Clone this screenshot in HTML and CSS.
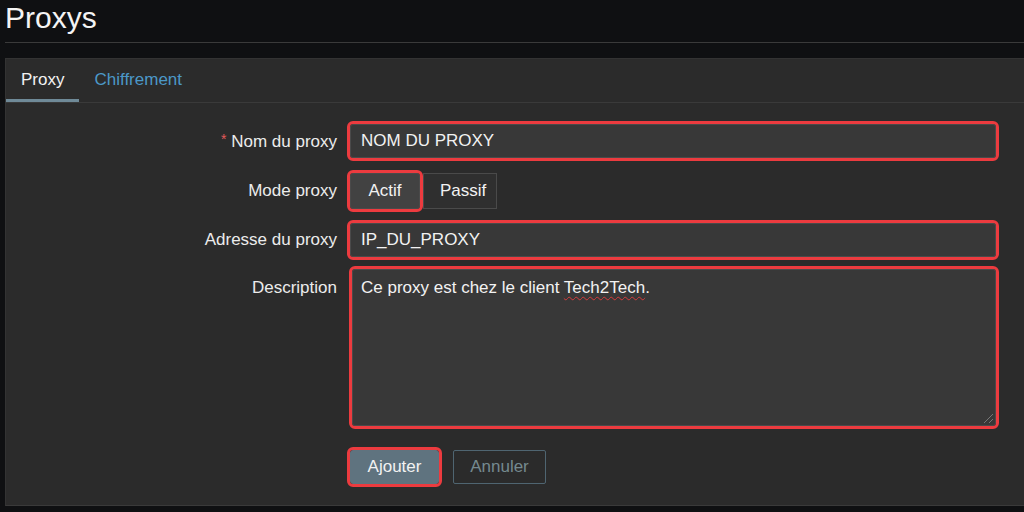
FILE: index.html
```html
<!DOCTYPE html>
<html lang="fr">
<head>
    <meta charset="UTF-8">
    <title>Proxys</title>
    <link rel="stylesheet" href="styles.css">
</head>
<body>
    <h1 class="page-title">Proxys</h1>

    <div class="panel">
        <div class="tabs">
            <div class="tab active">Proxy</div>
            <div class="tab">Chiffrement</div>
        </div>

        <div class="form">
            <div class="form-row row-name">
                <label class="form-label"><span class="required">*</span> Nom du proxy</label>
                <div class="form-field">
                    <div class="text-input highlight">NOM DU PROXY</div>
                </div>
            </div>

            <div class="form-row row-mode">
                <label class="form-label">Mode proxy</label>
                <div class="form-field">
                    <div class="segmented">
                        <div class="segment selected highlight">Actif</div>
                        <div class="segment">Passif</div>
                    </div>
                </div>
            </div>

            <div class="form-row row-address">
                <label class="form-label">Adresse du proxy</label>
                <div class="form-field">
                    <div class="text-input highlight">IP_DU_PROXY</div>
                </div>
            </div>

            <div class="form-row row-desc">
                <label class="form-label">Description</label>
                <div class="form-field">
                    <div class="textarea highlight">
                        Ce proxy est chez le client <span class="misspelled">Tech2Tech</span>.
                        <svg class="grip" width="12" height="12" viewBox="0 0 12 12">
                            <path d="M11 2 L2 11 M11 7 L7 11" stroke="#777" stroke-width="1" fill="none"/>
                        </svg>
                    </div>
                </div>
            </div>

            <div class="form-actions">
                <button class="btn btn-primary highlight">Ajouter</button>
                <button class="btn btn-secondary">Annuler</button>
            </div>
        </div>
    </div>
</body>
</html>
```

FILE: styles.css
```css
* {
    margin: 0;
    padding: 0;
    box-sizing: border-box;
    font-family: "Liberation Sans", Arial, sans-serif;
}

body {
    background-color: #0f1012;
    color: #f2f2f2;
    width: 1024px;
    height: 512px;
    overflow: hidden;
}

.page-title {
    font-size: 30px;
    font-weight: normal;
    line-height: 36px;
    padding-bottom: 6px;
    margin-left: 5px;
    border-bottom: 1px solid #3a3a3a;
    color: #f4f4f4;
}

.panel {
    margin: 15px 0 0 5px;
    height: 448px;
    background-color: #2b2b2b;
    border-left: 1px solid #333;
    border-top: 1px solid #333;
    border-bottom: 1px solid #3a3a3a;
}

.tabs {
    display: flex;
    height: 44px;
    border-bottom: 1px solid #3a3a3a;
}

.tab {
    padding: 0 15px;
    font-size: 17px;
    line-height: 41px;
    color: #4b98c8;
    border-bottom: 3px solid transparent;
}

.tab.active {
    color: #f2f2f2;
    border-bottom-color: #6f8a98;
}

.form {
    padding-top: 21px;
}

.form-row {
    display: flex;
    align-items: center;
}

.row-name { margin-bottom: 15px; }
.row-mode { margin-bottom: 14px; }
.row-address { margin-bottom: 12px; }
.row-desc {
    align-items: flex-start;
    margin-bottom: 24px;
}

.form-label {
    width: 344px;
    padding-right: 13px;
    text-align: right;
    font-size: 17px;
    color: #ececec;
}

.row-desc .form-label {
    padding-top: 9px;
}

.required {
    color: #e45959;
    font-size: 14px;
    vertical-align: 3px;
}

.text-input {
    width: 646px;
    height: 34px;
    padding: 0 10px;
    line-height: 32px;
    font-size: 17px;
    background-color: #383838;
    border: 1px solid #4a4a4a;
}

.highlight {
    outline: 3px solid #ec3b3f;
    border-radius: 3px;
}

.segmented {
    display: flex;
}

.segment {
    height: 36px;
    line-height: 34px;
    font-size: 17px;
    padding: 0 16px;
    background-color: #2f2f2f;
    border: 1px solid #4a4a4a;
    width: 74px;
    text-align: center;
}

.segment.selected {
    width: 70px;
    background-color: #424242;
    margin-right: 3px;
}

.textarea {
    position: relative;
    width: 644px;
    height: 157px;
    margin-left: 2px;
    padding: 8px 8px;
    font-size: 17px;
    line-height: 20px;
    background-color: #383838;
    border: 1px solid #4a4a4a;
}

.misspelled {
    text-decoration: underline wavy #d53b3b;
    text-decoration-thickness: 1px;
    text-underline-offset: 3px;
}

.grip {
    position: absolute;
    right: 1px;
    bottom: 1px;
}

.form-actions {
    display: flex;
    padding-left: 344px;
}

.btn {
    height: 34px;
    font-size: 17px;
    padding: 0 14px;
    cursor: pointer;
}

.btn-primary {
    width: 89px;
    background-color: #5f737f;
    color: #f2f2f2;
    border: 1px solid #5f737f;
}

.btn-secondary {
    width: 93px;
    margin-left: 14px;
    background-color: transparent;
    color: #75898f;
    border: 1px solid #4f6571;
    border-radius: 2px;
}
```
